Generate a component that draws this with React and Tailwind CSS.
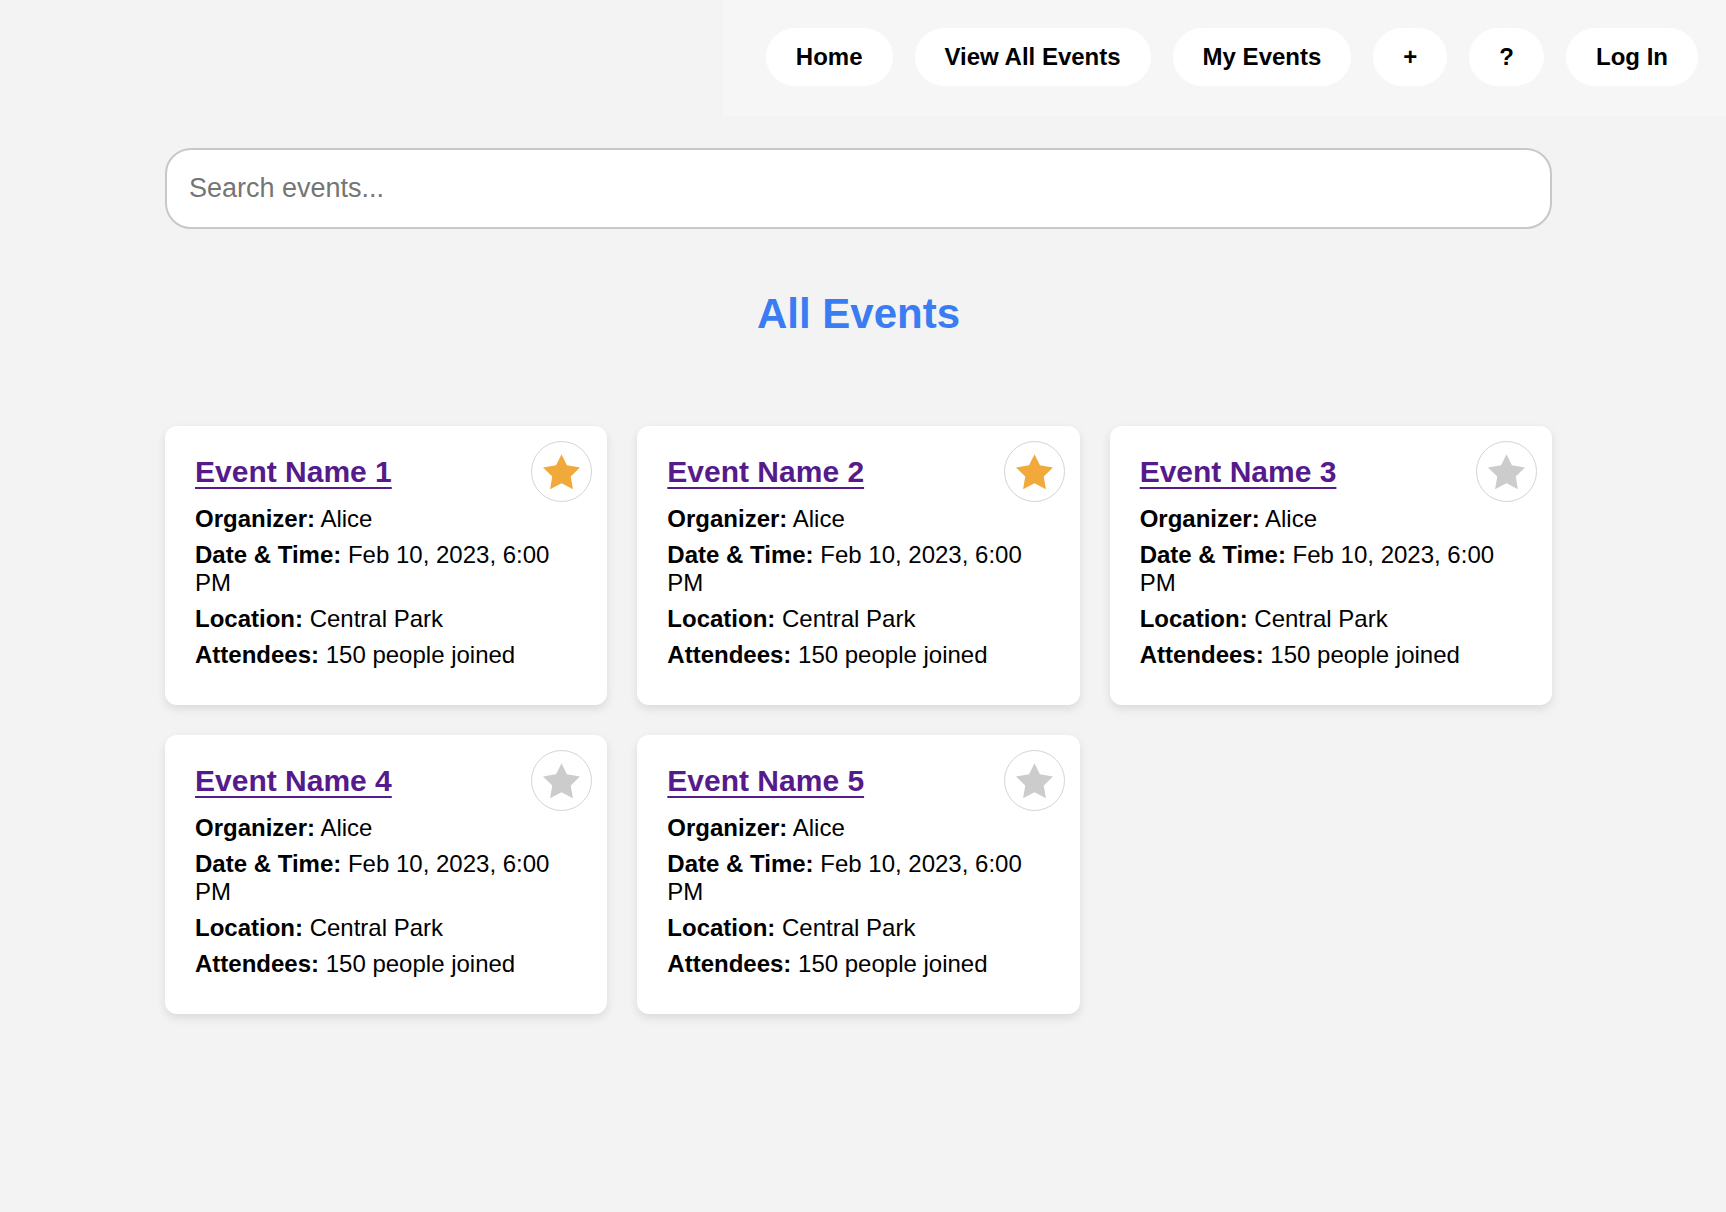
import { useState } from 'react'

const events = [
  { id: 1, name: 'Event Name 1', fav: true },
  { id: 2, name: 'Event Name 2', fav: true },
  { id: 3, name: 'Event Name 3', fav: false },
  { id: 4, name: 'Event Name 4', fav: false },
  { id: 5, name: 'Event Name 5', fav: false },
]

function Star({ on }) {
  return (
    <svg width="37" height="36" viewBox="2 2 20 19.3" fill={on ? '#f2a93b' : '#cccccc'}>
      <polygon points="12,2 14.94,8.06 22,9.27 17,14.14 18.18,21.02 12,17.77 5.82,21.02 7,14.14 2,9.27 9.06,8.06" />
    </svg>
  )
}

function EventCard({ event, onToggle }) {
  return (
    <div className="relative bg-white rounded-[12px] shadow-[0_4px_10px_rgba(0,0,0,0.1)] pt-[29px] px-[30px] pb-[36px]">
      <a href="#" className="block text-[30px] leading-[normal] font-bold text-[#551a8b] underline decoration-2 underline-offset-[5px] mb-[16px] w-fit">
        {event.name}
      </a>
      <p className="text-[24px] leading-[normal]"><b>Organizer:</b> Alice</p>
      <p className="text-[24px] leading-[normal] mt-[8px]"><b>Date &amp; Time:</b> Feb 10, 2023, 6:00 PM</p>
      <p className="text-[24px] leading-[normal] mt-[8px]"><b>Location:</b> Central Park</p>
      <p className="text-[24px] leading-[normal] mt-[8px]"><b>Attendees:</b> 150 people joined</p>
      <button
        onClick={() => onToggle(event.id)}
        className="absolute top-[15px] right-[15px] w-[61px] h-[61px] rounded-full border border-[#d4d4d4] bg-white flex items-center justify-center"
      >
        <Star on={event.fav} />
      </button>
    </div>
  )
}

export default function App() {
  const [list, setList] = useState(events)
  const [query, setQuery] = useState('')

  function toggle(id) {
    setList(list.map(e => (e.id === id ? { ...e, fav: !e.fav } : e)))
  }

  const shown = list.filter(e => e.name.toLowerCase().includes(query.toLowerCase()))

  return (
    <div className="min-h-[1212px] bg-[#f3f3f3] text-black font-['Liberation_Sans',Arial,sans-serif]">
      <div className="flex justify-end">
        <nav className="w-[1004px] bg-[#f6f6f6] flex justify-end gap-[22px] pl-[38px] pr-[28px] pt-[28px] pb-[30px]">
          {['Home', 'View All Events', 'My Events', '+', '?', 'Log In'].map(label => (
            <button key={label} className="bg-white rounded-full px-[30px] py-[15px] text-[24px] leading-[normal] font-bold whitespace-nowrap">
              {label}
            </button>
          ))}
        </nav>
      </div>

      <main className="ml-[165px] w-[1387px] pt-[32px]">
        <input
          value={query}
          onChange={e => setQuery(e.target.value)}
          placeholder="Search events..."
          className="w-full h-[81px] bg-white border-2 border-[#c8c8c8] rounded-[26px] px-[22px] text-[27px] outline-none placeholder:text-[#757575]"
        />

        <h1 className="mt-[61px] text-center text-[42px] leading-[normal] font-bold text-[#3a7cf1]">
          All Events
        </h1>

        <div className="mt-[88px] grid grid-cols-3 gap-[30px]">
          {shown.map(ev => (
            <EventCard key={ev.id} event={ev} onToggle={toggle} />
          ))}
        </div>
      </main>
    </div>
  )
}
